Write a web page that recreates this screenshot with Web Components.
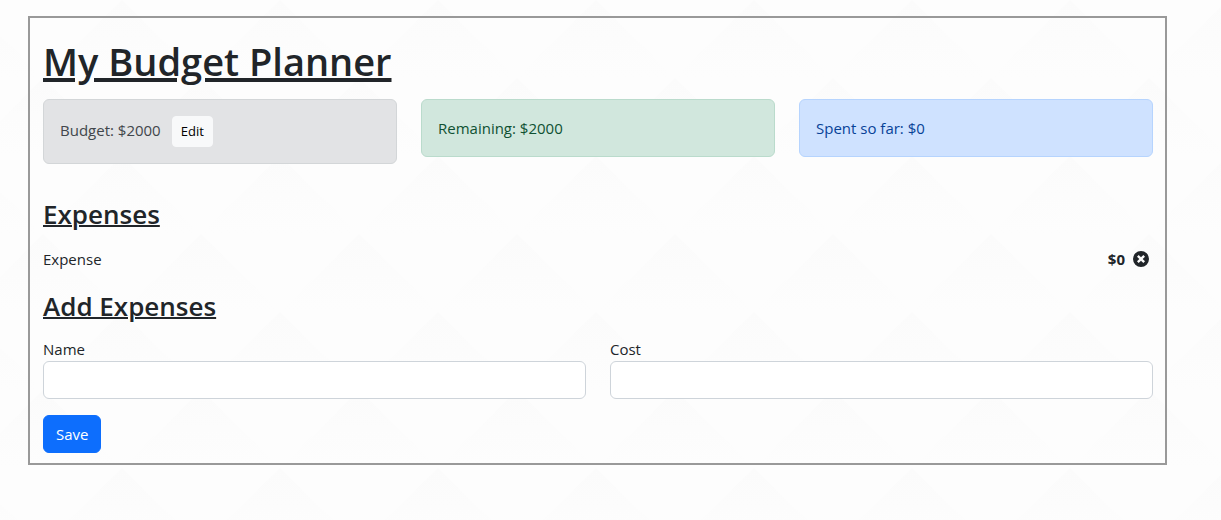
<!DOCTYPE html>
<html lang="en">
<head>
<meta charset="utf-8">
<meta name="viewport" content="width=device-width, initial-scale=1">
<title>My Budget Planner</title>
<style>
  body {
    margin: 0;
    min-height: 100vh;
    box-sizing: border-box;
    padding: 16px 54px 16px 28px;
    color: #212529;
    font: 400 15px/24px "Open Sans", "Noto Sans", sans-serif;
    background: #fdfdfd url("data:image/svg+xml,%3Csvg xmlns='http://www.w3.org/2000/svg' width='158' height='156'%3E%3Cdefs%3E%3ClinearGradient id='g' x2='0' y2='1'%3E%3Cstop stop-color='%23fbfbfb'/%3E%3Cstop offset='1' stop-color='%23fdfdfd'/%3E%3C/linearGradient%3E%3C/defs%3E%3Cpath fill='url(%23g)' d='M79 0L158 78H0z'/%3E%3Cpath fill='url(%23g)' d='M0 78L79 156H-79z'/%3E%3Cpath fill='url(%23g)' d='M158 78L237 156H79z'/%3E%3C/svg%3E") 43px 0;
  }
</style>
</head>
<body>
<budget-app></budget-app>
<script>
const define = (name, html, setup) => {
  const template = document.createElement('template');
  template.innerHTML = html;
  customElements.define(name, class extends HTMLElement {
    constructor() {
      super();
      this.attachShadow({ mode: 'open' }).append(template.content.cloneNode(true));
    }
    connectedCallback() {
      if (setup) setup(this, this.shadowRoot);
    }
  });
};

define('summary-card', `
<style>
  :host {
    display: block;
    box-sizing: border-box;
    padding: 16px;
    border: 1px solid #badbcc;
    border-radius: 6px;
    background: #d1e7dd;
    color: #0f5132;
  }
  :host([tone="neutral"]) { background: #e2e3e5; border-color: #d3d6d8; color: #41464b; }
  :host([tone="info"]) { background: #cfe2ff; border-color: #b6d4fe; color: #084298; }
  div { display: flex; align-items: baseline; gap: 11px; }
</style>
<div><slot></slot></div>`);

define('action-button', `
<style>
  :host { display: inline-block; }
  button {
    display: block;
    margin: 0;
    padding: 6px 12px;
    border: 1px solid #0d6efd;
    border-radius: 6px;
    background: #0d6efd;
    color: #fff;
    font: inherit;
    cursor: pointer;
  }
  :host([variant="light"]) button {
    padding: 4px 8px;
    border-color: #f8f9fa;
    border-radius: 4px;
    background: #f8f9fa;
    color: #000;
    font-size: 13px;
    line-height: 21px;
  }
</style>
<button type="button"><slot></slot></button>`);

define('section-title', `
<style>
  :host { display: block; }
  h2 { margin: 0; font-size: 26px; font-weight: 600; line-height: 34px; text-decoration: underline 2px; }
</style>
<h2><slot></slot></h2>`);

define('expense-item', `
<style>
  :host { display: flex; align-items: center; justify-content: space-between; }
  .amount { display: flex; align-items: center; gap: 8px; padding-right: 4px; }
  b { font-weight: 700; }
  button { display: block; padding: 0; border: 0; background: none; color: inherit; cursor: pointer; }
  svg { display: block; }
</style>
<span><slot></slot></span>
<div class="amount">
  <b><slot name="amount"></slot></b>
  <button type="button" aria-label="Delete expense">
    <svg width="16" height="16" viewBox="0 0 24 24" fill="currentColor" aria-hidden="true">
      <path fill-rule="evenodd" d="M12 0a12 12 0 1 0 0 24 12 12 0 0 0 0-24zm6 15.5L15.500 18 12 14.500 8.500 18 6 15.500 9.500 12 6 8.500 8.500 6 12 9.500 15.500 6 18 8.500 14.500 12z"/>
    </svg>
  </button>
</div>`);

define('form-field', `
<style>
  :host { display: block; }
  label { display: block; }
  input {
    display: block;
    box-sizing: border-box;
    width: 100%;
    height: 38px;
    margin: 0;
    padding: 6px 12px;
    border: 1px solid #ced4da;
    border-radius: 6px;
    background: #fff;
    color: inherit;
    font: inherit;
  }
</style>
<label for="field"></label>
<input id="field" type="text">`, (host, root) => {
  root.querySelector('label').textContent = host.getAttribute('label');
});

define('budget-app', `
<style>
  :host {
    display: block;
    padding: 19px 12px 10px 13px;
    border: 2px solid #999;
  }
  h1 { margin: 0 0 14px; font-size: 38px; font-weight: 600; line-height: 48px; text-decoration: underline 4px; }
  .cards { display: grid; grid-template-columns: repeat(3, 1fr); align-items: start; gap: 24px; }
  .list { margin: 33px 0 18px; }
  expense-item { margin-top: 16px; }
  .fields { display: grid; grid-template-columns: repeat(2, 1fr); gap: 24px; margin: 14px 0 16px; }
</style>
<h1>My Budget Planner</h1>
<div class="cards">
  <summary-card tone="neutral"><span>Budget: $2000</span><action-button variant="light">Edit</action-button></summary-card>
  <summary-card>Remaining: $2000</summary-card>
  <summary-card tone="info">Spent so far: $0</summary-card>
</div>
<div class="list">
  <section-title>Expenses</section-title>
  <expense-item>Expense<span slot="amount">$0</span></expense-item>
</div>
<section-title>Add Expenses</section-title>
<div class="fields">
  <form-field label="Name"></form-field>
  <form-field label="Cost"></form-field>
</div>
<action-button>Save</action-button>`);
</script>
</body>
</html>
